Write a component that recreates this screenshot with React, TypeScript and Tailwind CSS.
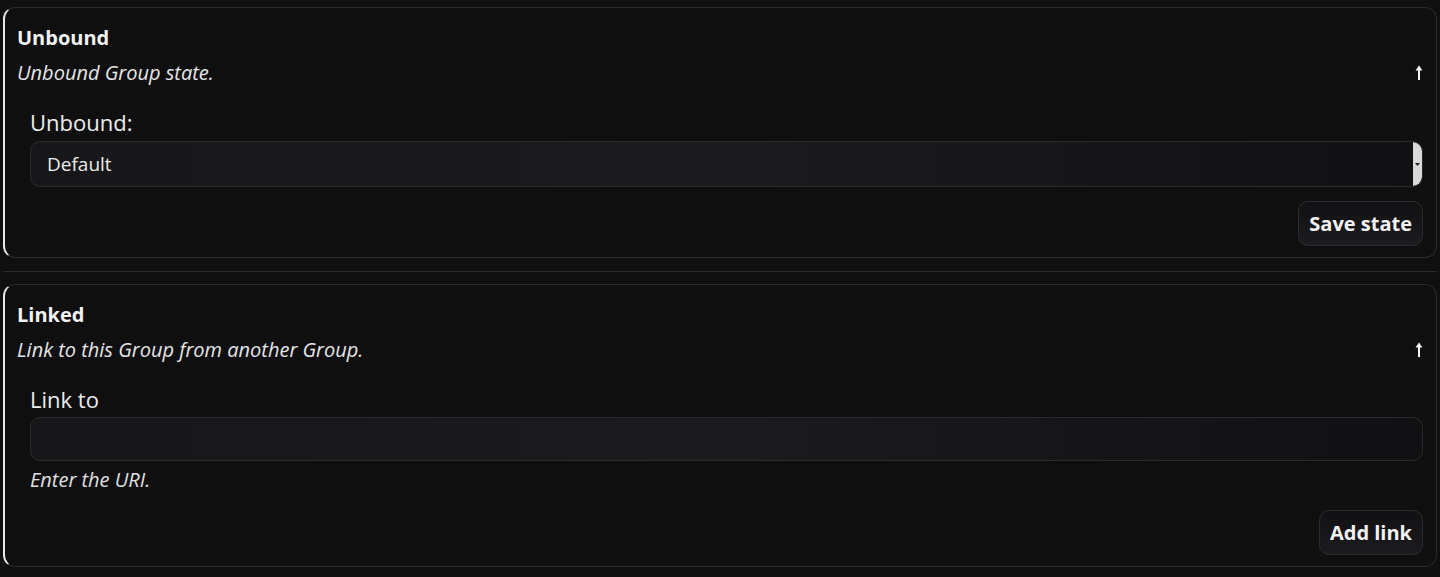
function UpArrow() {
  return (
    <svg width="8" height="16" viewBox="0 0 8 16" className="shrink-0">
      <path d="M4 0.5L7.5 5.5H0.5z" fill="#f5f5f5" />
      <rect x="3" y="4" width="2" height="11" fill="#f5f5f5" />
    </svg>
  );
}

function Card({
  title,
  subtitle,
  children,
}: {
  title: string;
  subtitle: string;
  children: React.ReactNode;
}) {
  return (
    <section className="rounded-[12px] border border-[#2a2a2e] border-l-[2px] border-l-[#e8e8e8] pl-[12px] pr-[13px] pt-[16px] pb-[11px]">
      <h2 className="text-[20px] leading-[28px] font-bold text-[#f2f2f2]">{title}</h2>
      <div className="mt-[7px] flex items-center justify-between">
        <p className="text-[20px] leading-[28px] italic text-[#e6e6e6]">{subtitle}</p>
        <UpArrow />
      </div>
      <div className="ml-[13px] mt-[20px]">{children}</div>
    </section>
  );
}

function Button({ label }: { label: string }) {
  return (
    <button className="rounded-[10px] border border-[#2c2c31] bg-gradient-to-b from-[#111113] to-[#1c1c20] px-[10px] py-[7px] text-[20px] leading-[29px] font-bold text-[#f2f2f2]">
      {label}
    </button>
  );
}

export default function App() {
  return (
    <div
      className="min-h-[577px] bg-[#0f0f10] px-[3px] pt-[7px] pb-[9px]"
      style={{ fontFamily: '"Open Sans", "Noto Sans", sans-serif' }}
    >
      <Card title="Unbound" subtitle="Unbound Group state.">
        <label className="block text-[22px] leading-[30px] font-medium text-[#ececec]">Unbound:</label>
        <div className="mt-[4px] flex h-[46px] items-center overflow-hidden rounded-[10px] border border-[#2a2a2e] bg-gradient-to-r from-[#17171a] via-[#1b1b1e] to-[#111113]">
          <span className="flex-1 pl-[16px] text-[19px] text-[#ececec]">Default</span>
          <div className="flex h-full w-[9px] items-center justify-center rounded-r-[10px] bg-[#d9d9d9]">
            <svg width="5" height="3" viewBox="0 0 5 3">
              <path d="M0 0h5L2.5 3z" fill="#222" />
            </svg>
          </div>
        </div>
        <div className="mt-[14px] flex justify-end">
          <Button label="Save state" />
        </div>
      </Card>

      <div className="mt-[13px] mb-[12px] h-px bg-[#2a2a2e]" />

      <Card title="Linked" subtitle="Link to this Group from another Group.">
        <label className="block text-[22px] leading-[30px] font-medium text-[#ececec]">Link to</label>
        <input className="mt-[3px] block h-[44px] w-full rounded-[10px] border border-[#2a2a2e] bg-gradient-to-r from-[#17171a] via-[#1b1b1e] to-[#111113] px-[16px] text-[#ececec] outline-none" />
        <p className="mt-[5px] text-[20px] leading-[28px] italic text-[#e0e0e0]">Enter the URI.</p>
        <div className="mt-[16px] flex justify-end">
          <Button label="Add link" />
        </div>
      </Card>
    </div>
  );
}
